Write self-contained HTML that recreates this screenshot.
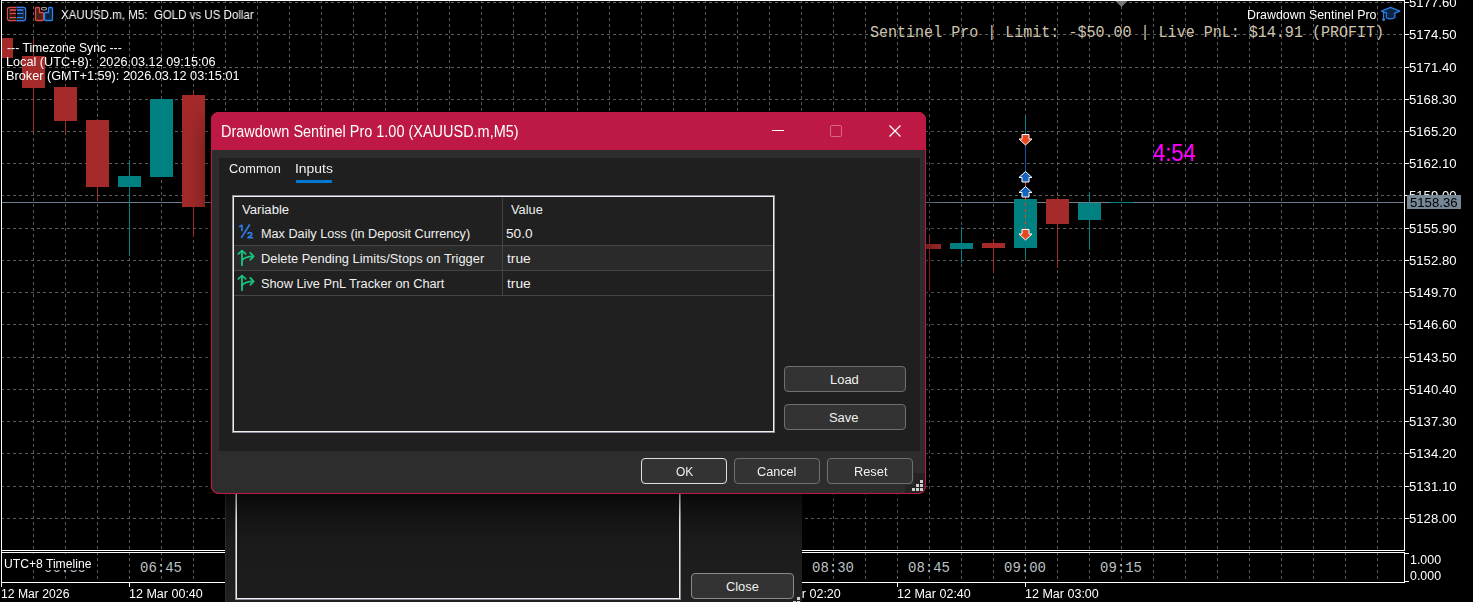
<!DOCTYPE html>
<html><head><meta charset="utf-8">
<style>
html,body{margin:0;padding:0;}
body{width:1473px;height:602px;overflow:hidden;background:#000;position:relative;font-family:"Liberation Sans",sans-serif;}
#chart{position:absolute;left:0;top:0;}
.t{position:absolute;white-space:pre;line-height:1;transform-origin:0 0;}
.g{will-change:transform;}
.abs{position:absolute;}
.btn{position:absolute;box-sizing:border-box;border:1px solid #707070;border-radius:4px;background:#333333;}
</style></head><body>
<svg id="chart" width="1473" height="602" viewBox="0 0 1473 602" shape-rendering="crispEdges">
<path d="M1 2.5H1404 M1 34.5H1404 M1 67.5H1404 M1 99.5H1404 M1 131.5H1404 M1 163.5H1404 M1 195.5H1404 M1 228.5H1404 M1 260.5H1404 M1 292.5H1404 M1 324.5H1404 M1 357.5H1404 M1 389.5H1404 M1 421.5H1404 M1 453.5H1404 M1 486.5H1404 M1 518.5H1404" stroke="#5c5c5c" stroke-dasharray="3 3" fill="none"/>
<path d="M33.5 0V550 M65.5 0V550 M97.5 0V550 M129.5 0V550 M161.5 0V550 M193.5 0V550 M225.5 0V550 M257.5 0V550 M289.5 0V550 M321.5 0V550 M353.5 0V550 M385.5 0V550 M417.5 0V550 M449.5 0V550 M481.5 0V550 M513.5 0V550 M545.5 0V550 M577.5 0V550 M609.5 0V550 M641.5 0V550 M673.5 0V550 M705.5 0V550 M737.5 0V550 M769.5 0V550 M801.5 0V550 M833.5 0V550 M865.5 0V550 M897.5 0V550 M929.5 0V550 M961.5 0V550 M993.5 0V550 M1025.5 0V550 M1057.5 0V550 M1089.5 0V550 M1121.5 0V550 M1153.5 0V550 M1185.5 0V550 M1217.5 0V550 M1249.5 0V550 M1281.5 0V550 M1313.5 0V550 M1345.5 0V550 M1377.5 0V550" stroke="#5c5c5c" stroke-dasharray="3 3" fill="none"/>
<path d="M33.5 552V582 M65.5 552V582 M97.5 552V582 M129.5 552V582 M161.5 552V582 M193.5 552V582 M225.5 552V582 M257.5 552V582 M289.5 552V582 M321.5 552V582 M353.5 552V582 M385.5 552V582 M417.5 552V582 M449.5 552V582 M481.5 552V582 M513.5 552V582 M545.5 552V582 M577.5 552V582 M609.5 552V582 M641.5 552V582 M673.5 552V582 M705.5 552V582 M737.5 552V582 M769.5 552V582 M801.5 552V582 M833.5 552V582 M865.5 552V582 M897.5 552V582 M929.5 552V582 M961.5 552V582 M993.5 552V582 M1025.5 552V582 M1057.5 552V582 M1089.5 552V582 M1121.5 552V582 M1153.5 552V582 M1185.5 552V582 M1217.5 552V582 M1249.5 552V582 M1281.5 552V582 M1313.5 552V582 M1345.5 552V582 M1377.5 552V582" stroke="#5c5c5c" stroke-dasharray="3 3" fill="none"/>
<rect x="2" y="202" width="1402" height="1" fill="#6e7e8e"/>
<rect x="-10" y="38" width="23" height="20" fill="#a52a2a"/>
<rect x="33" y="39" width="1" height="93" fill="#a52a2a"/><rect x="22" y="56" width="23" height="32" fill="#a52a2a"/>
<rect x="65" y="85" width="1" height="48" fill="#a52a2a"/><rect x="54" y="87" width="23" height="34" fill="#a52a2a"/>
<rect x="97" y="119" width="1" height="82" fill="#a52a2a"/><rect x="86" y="120" width="23" height="67" fill="#a52a2a"/>
<rect x="129" y="160" width="1" height="96" fill="#008080"/><rect x="118" y="176" width="23" height="11" fill="#008080"/>
<rect x="150" y="99" width="23" height="78" fill="#008080"/>
<rect x="193" y="92" width="1" height="145" fill="#a52a2a"/><rect x="182" y="95" width="23" height="112" fill="#a52a2a"/>
<rect x="929" y="235" width="1" height="55" fill="#a52a2a"/><rect x="918" y="244" width="23" height="5" fill="#a52a2a"/>
<rect x="961" y="227" width="1" height="36" fill="#008080"/><rect x="950" y="243" width="23" height="6" fill="#008080"/>
<rect x="993" y="239" width="1" height="34" fill="#a52a2a"/><rect x="982" y="243" width="23" height="5" fill="#a52a2a"/>
<rect x="1025" y="116" width="1" height="142" fill="#008080"/><rect x="1014" y="199" width="23" height="49" fill="#008080"/>
<rect x="1057" y="197" width="1" height="71" fill="#a52a2a"/><rect x="1046" y="199" width="23" height="25" fill="#a52a2a"/>
<rect x="1089" y="192" width="1" height="58" fill="#008080"/><rect x="1078" y="203" width="23" height="17" fill="#008080"/>
<rect x="1110" y="202" width="23" height="1" fill="#008080"/>
<rect x="0" y="0" width="1" height="602" fill="#000"/>
<rect x="1025" y="145" width="1" height="27" fill="#1a4f9a"/>
<rect x="1025" y="182" width="1" height="5" fill="#e8471e"/>
<path d="M1025.5 197V229" stroke="#e8471e" stroke-dasharray="3 3"/>
<polygon points="1022.0,134.5 1029.0,134.5 1029.0,139 1032.0,139 1025.5,145 1019.0,139 1022.0,139" fill="#e8471e" stroke="#fff" stroke-width="1" shape-rendering="geometricPrecision"/>
<polygon points="1025.5,171.5 1032.0,177.5 1029.0,177.5 1029.0,182.0 1022.0,182.0 1022.0,177.5 1019.0,177.5" fill="#1565c0" stroke="#fff" stroke-width="1" shape-rendering="geometricPrecision"/>
<polygon points="1025.5,186.5 1032.0,192.5 1029.0,192.5 1029.0,197.0 1022.0,197.0 1022.0,192.5 1019.0,192.5" fill="#1565c0" stroke="#fff" stroke-width="1" shape-rendering="geometricPrecision"/>
<polygon points="1022.0,229.5 1029.0,229.5 1029.0,234 1032.0,234 1025.5,240 1019.0,234 1022.0,234" fill="#e8471e" stroke="#fff" stroke-width="1" shape-rendering="geometricPrecision"/>
<polygon points="1115.5,1 1127.5,1 1121.5,7" fill="#777777" shape-rendering="geometricPrecision"/>
<rect x="1" y="0" width="1404" height="1" fill="#ffffff"/>
<rect x="1" y="0" width="1" height="583" fill="#ffffff"/>
<rect x="1404" y="0" width="1" height="551" fill="#ffffff"/>
<rect x="1404" y="552" width="1" height="31" fill="#ffffff"/>
<rect x="1" y="550" width="1404" height="1" fill="#ffffff"/>
<rect x="1" y="552" width="1404" height="1" fill="#ffffff"/>
<rect x="1" y="582" width="1404" height="1" fill="#ffffff"/>
<rect x="1405" y="2" width="4" height="1" fill="#ffffff"/>
<rect x="1405" y="34" width="4" height="1" fill="#ffffff"/>
<rect x="1405" y="67" width="4" height="1" fill="#ffffff"/>
<rect x="1405" y="99" width="4" height="1" fill="#ffffff"/>
<rect x="1405" y="131" width="4" height="1" fill="#ffffff"/>
<rect x="1405" y="163" width="4" height="1" fill="#ffffff"/>
<rect x="1405" y="195" width="4" height="1" fill="#ffffff"/>
<rect x="1405" y="228" width="4" height="1" fill="#ffffff"/>
<rect x="1405" y="260" width="4" height="1" fill="#ffffff"/>
<rect x="1405" y="292" width="4" height="1" fill="#ffffff"/>
<rect x="1405" y="324" width="4" height="1" fill="#ffffff"/>
<rect x="1405" y="357" width="4" height="1" fill="#ffffff"/>
<rect x="1405" y="389" width="4" height="1" fill="#ffffff"/>
<rect x="1405" y="421" width="4" height="1" fill="#ffffff"/>
<rect x="1405" y="453" width="4" height="1" fill="#ffffff"/>
<rect x="1405" y="486" width="4" height="1" fill="#ffffff"/>
<rect x="1405" y="518" width="4" height="1" fill="#ffffff"/>
<rect x="1405" y="553" width="4" height="1" fill="#ffffff"/>
<rect x="1405" y="581" width="4" height="1" fill="#ffffff"/>
<rect x="1" y="583" width="1" height="4" fill="#ffffff"/>
<rect x="129" y="583" width="1" height="4" fill="#ffffff"/>
<rect x="897" y="583" width="1" height="4" fill="#ffffff"/>
<rect x="1025" y="583" width="1" height="4" fill="#ffffff"/>
<g shape-rendering="geometricPrecision">
 <rect x="7.5" y="7.5" width="18" height="13" rx="2" fill="none" stroke="#e04848" stroke-width="1.3"/>
 <rect x="16.5" y="6.8" width="9.7" height="14.4" fill="#000"/>
 <path d="M16.5 7.5H23.5a2 2 0 0 1 2 2V18.5a2 2 0 0 1-2 2H16.5" fill="none" stroke="#2f7ff0" stroke-width="1.3"/>
 <rect x="9.5" y="9.5" width="14" height="9" fill="none" stroke="#333" stroke-width="1"/>
 <rect x="10" y="9" width="6" height="2" fill="#c0403a"/>
 <rect x="10" y="13" width="6" height="1" fill="#e85050"/>
 <rect x="10" y="17" width="6" height="1" fill="#e85050"/>
 <rect x="10" y="11" width="6" height="2" fill="#401510"/>
 <rect x="10" y="14" width="6" height="3" fill="#401510"/>
 <rect x="17" y="9" width="6" height="2" fill="#2a6ad0"/>
 <rect x="17" y="13" width="6" height="1" fill="#3388ff"/>
 <rect x="17" y="17" width="6" height="1" fill="#3388ff"/>
 <rect x="17" y="11" width="6" height="2" fill="#0a2540"/>
 <rect x="17" y="14" width="6" height="3" fill="#0a2540"/>
</g>
<g shape-rendering="geometricPrecision">
 <path d="M35.5 8.5a1 1 0 0 1 1-1H38.5a1 1 0 0 1 1 1V12.5H42.5a1 1 0 0 1 1 1V19.5a1 1 0 0 1-1 1H36.5a1 1 0 0 1-1-1Z" fill="#4a2015" stroke="#e04848" stroke-width="1.3"/>
 <path d="M52.5 8.5a1 1 0 0 0-1-1H49.5a1 1 0 0 0-1 1V12.5H45.5a1 1 0 0 0-1 1V19.5a1 1 0 0 0 1 1H51.5a1 1 0 0 0 1-1Z" fill="#0a2540" stroke="#2f7ff0" stroke-width="1.3"/>
 <rect x="41.5" y="7.5" width="5" height="2.5" rx="1.2" fill="none" stroke="#a0a0a0" stroke-width="1.2"/>
</g>
<g shape-rendering="geometricPrecision">
 <path d="M1381.5 11.2L1390.6 7.4L1399.8 11.2L1390.6 14.8Z" fill="#0a2540" stroke="#2b7de9" stroke-width="1.3" stroke-linejoin="round"/>
 <path d="M1386.3 13.2V17a4.3 1.8 0 0 0 8.6 0V13.2" fill="#0a2540" stroke="#2b7de9" stroke-width="1.3"/>
 <path d="M1383.6 12V18.5" stroke="#2b7de9" stroke-width="1.3"/>
 <circle cx="1383.6" cy="19.6" r="1.5" fill="#2b7de9"/>
</g>

</svg>
<div class="t g" style="left:61.00px;top:9.00px;font-family:'Liberation Sans';font-size:12px;color:#ffffff;transform:scale(0.9602,1.0);">XAUUSD.m, M5:  GOLD vs US Dollar</div>
<div class="t g" style="left:7.00px;top:42.00px;font-family:'Liberation Sans';font-size:12px;color:#ffffff;transform:scale(1.0179,1.0);">--- Timezone Sync ---</div>
<div class="t g" style="left:5.94px;top:56.00px;font-family:'Liberation Sans';font-size:12px;color:#ffffff;transform:scale(1.0558,1.0);">Local (UTC+8):  2026.03.12 09:15:06</div>
<div class="t g" style="left:5.94px;top:70.00px;font-family:'Liberation Sans';font-size:12px;color:#ffffff;transform:scale(1.0594,1.0);">Broker (GMT+1:59): 2026.03.12 03:15:01</div>
<div class="t g" style="left:1246.97px;top:9.00px;font-family:'Liberation Sans';font-size:12px;color:#ffffff;transform:scale(1.0323,1.0);">Drawdown Sentinel Pro</div>
<div class="t" style="left:870.06px;top:25.00px;font-family:'Liberation Mono';font-size:16px;color:#cfc4b0;transform:scale(0.9393,1.0);">Sentinel Pro | Limit: -$50.00 | Live PnL: $14.91 (PROFIT)</div>
<div class="t" style="left:1153.00px;top:141.80px;font-family:'Liberation Sans';font-size:22px;color:#ff00ff;transform:scale(1.0,1.0667);">4:54</div>
<div class="t g" style="left:1408.90px;top:-3.00px;font-family:'Liberation Sans';font-size:12px;color:#ffffff;transform:scale(1.0952,1.0);">5177.60</div>
<div class="t g" style="left:1408.90px;top:29.00px;font-family:'Liberation Sans';font-size:12px;color:#ffffff;transform:scale(1.0952,1.0);">5174.50</div>
<div class="t g" style="left:1408.90px;top:62.00px;font-family:'Liberation Sans';font-size:12px;color:#ffffff;transform:scale(1.0952,1.0);">5171.40</div>
<div class="t g" style="left:1408.90px;top:94.00px;font-family:'Liberation Sans';font-size:12px;color:#ffffff;transform:scale(1.0952,1.0);">5168.30</div>
<div class="t g" style="left:1408.90px;top:126.00px;font-family:'Liberation Sans';font-size:12px;color:#ffffff;transform:scale(1.0952,1.0);">5165.20</div>
<div class="t g" style="left:1408.90px;top:158.00px;font-family:'Liberation Sans';font-size:12px;color:#ffffff;transform:scale(1.0952,1.0);">5162.10</div>
<div class="t g" style="left:1408.90px;top:190.00px;font-family:'Liberation Sans';font-size:12px;color:#ffffff;transform:scale(1.0952,1.0);">5159.00</div>
<div class="t g" style="left:1408.90px;top:223.00px;font-family:'Liberation Sans';font-size:12px;color:#ffffff;transform:scale(1.0952,1.0);">5155.90</div>
<div class="t g" style="left:1408.90px;top:255.00px;font-family:'Liberation Sans';font-size:12px;color:#ffffff;transform:scale(1.0952,1.0);">5152.80</div>
<div class="t g" style="left:1408.90px;top:287.00px;font-family:'Liberation Sans';font-size:12px;color:#ffffff;transform:scale(1.0952,1.0);">5149.70</div>
<div class="t g" style="left:1408.90px;top:319.00px;font-family:'Liberation Sans';font-size:12px;color:#ffffff;transform:scale(1.0952,1.0);">5146.60</div>
<div class="t g" style="left:1408.90px;top:352.00px;font-family:'Liberation Sans';font-size:12px;color:#ffffff;transform:scale(1.0952,1.0);">5143.50</div>
<div class="t g" style="left:1408.90px;top:384.00px;font-family:'Liberation Sans';font-size:12px;color:#ffffff;transform:scale(1.0952,1.0);">5140.40</div>
<div class="t g" style="left:1408.90px;top:416.00px;font-family:'Liberation Sans';font-size:12px;color:#ffffff;transform:scale(1.0952,1.0);">5137.30</div>
<div class="t g" style="left:1408.90px;top:448.00px;font-family:'Liberation Sans';font-size:12px;color:#ffffff;transform:scale(1.0952,1.0);">5134.20</div>
<div class="t g" style="left:1408.90px;top:481.00px;font-family:'Liberation Sans';font-size:12px;color:#ffffff;transform:scale(1.0952,1.0);">5131.10</div>
<div class="t g" style="left:1408.90px;top:513.00px;font-family:'Liberation Sans';font-size:12px;color:#ffffff;transform:scale(1.0952,1.0);">5128.00</div>
<div class="abs" style="left:1407px;top:195px;width:54px;height:14px;background:#778899;"></div>
<div class="t g" style="left:1409.90px;top:197.00px;font-family:'Liberation Sans';font-size:12px;color:#000000;transform:scale(1.0952,1.0);">5158.36</div>
<div class="t g" style="left:1409.97px;top:554.00px;font-family:'Liberation Sans';font-size:12px;color:#ffffff;transform:scale(1.0345,1.0);">1.000</div>
<div class="t g" style="left:1410.00px;top:570.00px;font-family:'Liberation Sans';font-size:12px;color:#ffffff;transform:scale(1.0333,1.0);">0.000</div>
<div class="t" style="left:44.00px;top:561.00px;font-family:'Liberation Mono';font-size:14px;color:#bcc0c6;transform:scale(1.0,1.0);">06:30</div>
<div class="t" style="left:140.00px;top:561.00px;font-family:'Liberation Mono';font-size:14px;color:#bcc0c6;transform:scale(1.0,1.0);">06:45</div>
<div class="t" style="left:812.00px;top:561.00px;font-family:'Liberation Mono';font-size:14px;color:#bcc0c6;transform:scale(1.0,1.0);">08:30</div>
<div class="t" style="left:908.00px;top:561.00px;font-family:'Liberation Mono';font-size:14px;color:#bcc0c6;transform:scale(1.0,1.0);">08:45</div>
<div class="t" style="left:1004.00px;top:561.00px;font-family:'Liberation Mono';font-size:14px;color:#bcc0c6;transform:scale(1.0,1.0);">09:00</div>
<div class="t" style="left:1100.00px;top:561.00px;font-family:'Liberation Mono';font-size:14px;color:#bcc0c6;transform:scale(1.0,1.0);">09:15</div>
<div class="abs" style="left:2px;top:554px;width:91px;height:16px;background:#000;"></div>
<div class="t g" style="left:3.99px;top:558.00px;font-family:'Liberation Sans';font-size:12px;color:#ffffff;transform:scale(1.0118,1.0);">UTC+8 Timeline</div>
<div class="t g" style="left:0.98px;top:588.00px;font-family:'Liberation Sans';font-size:12px;color:#ffffff;transform:scale(1.0152,1.0);">12 Mar 2026</div>
<div class="t g" style="left:128.96px;top:588.00px;font-family:'Liberation Sans';font-size:12px;color:#ffffff;transform:scale(1.0435,1.0);">12 Mar 00:40</div>
<div class="t g" style="left:766.96px;top:588.00px;font-family:'Liberation Sans';font-size:12px;color:#ffffff;transform:scale(1.0435,1.0);">12 Mar 02:20</div>
<div class="t g" style="left:896.96px;top:588.00px;font-family:'Liberation Sans';font-size:12px;color:#ffffff;transform:scale(1.0435,1.0);">12 Mar 02:40</div>
<div class="t g" style="left:1024.96px;top:588.00px;font-family:'Liberation Sans';font-size:12px;color:#ffffff;transform:scale(1.0435,1.0);">12 Mar 03:00</div>
<!-- window behind -->
<div class="abs" style="left:225px;top:494px;width:577px;height:108px;background:linear-gradient(#121212,#1c1c1c 50%,#202020);"></div>
<div class="abs" style="left:225px;top:494px;width:1px;height:108px;background:#2a2a2a;"></div>
<div class="abs" style="left:235px;top:490px;width:446px;height:110px;box-sizing:border-box;border:1px solid #8a9099;border-top:none;"><div class="abs" style="left:0;top:0;width:444px;height:109px;box-sizing:border-box;border:1px solid #f0f0f0;border-top:none;background:linear-gradient(#111,#1a1a1a 50%,#1d1d1d);"></div></div>
<div class="btn" style="left:691px;top:573px;width:103px;height:26px;border-color:#8a8a8a;"></div>
<div class="t" style="left:725.93px;top:581.00px;font-family:'Liberation Sans';font-size:12px;color:#f0f0f0;transform:scale(1.069,1.0);">Close</div>
<svg class="abs" style="left:0;top:0;" width="1473" height="602" shape-rendering="crispEdges"><g fill="#cfcfcf"><rect x="797" y="597" width="3" height="3"/><rect x="793" y="601" width="3" height="3"/><rect x="797" y="601" width="3" height="3"/></g></svg>
<!-- dialog -->
<div class="abs" style="left:211px;top:112px;width:715px;height:382px;border-radius:8px;background:#2d2d2d;box-shadow:0 8px 28px rgba(0,0,0,0.6);"></div>
<div class="abs" style="left:211px;top:112px;width:715px;height:382px;border-radius:8px;box-sizing:border-box;border:1px solid #bd1944;"></div>
<div class="abs" style="left:211px;top:112px;width:715px;height:38px;border-radius:8px 8px 0 0;background:#bd1944;"></div>
<div class="abs" style="left:772px;top:130px;width:12px;height:1px;background:#fff;"></div>
<div class="abs" style="left:830px;top:125px;width:12px;height:12px;box-sizing:border-box;border:1px solid rgba(255,255,255,0.35);border-radius:2px;"></div>
<svg class="abs" style="left:888px;top:124px;" width="14" height="14" viewBox="0 0 14 14"><path d="M1.5 1.5L12.5 12.5M12.5 1.5L1.5 12.5" stroke="#fff" stroke-width="1.2"/></svg>
<div class="abs" style="left:219px;top:158px;width:701px;height:293px;background:#1f1f1f;"></div>
<div class="abs" style="left:296px;top:180px;width:36px;height:3px;background:#0078d4;"></div>
<div class="abs" style="left:232px;top:195px;width:543px;height:238px;box-sizing:border-box;border:1px solid #8a9099;background:#202020;"><div class="abs" style="left:0;top:0;width:541px;height:236px;box-sizing:border-box;border:1px solid #f0f0f0;"></div></div>
<div class="abs" style="left:234px;top:246px;width:539px;height:24px;background:#2a2a2a;"></div>
<div class="abs" style="left:234px;top:245px;width:539px;height:1px;background:#444444;"></div>
<div class="abs" style="left:234px;top:270px;width:539px;height:1px;background:#444444;"></div>
<div class="abs" style="left:234px;top:295px;width:539px;height:1px;background:#444444;"></div>
<div class="abs" style="left:502px;top:198px;width:1px;height:97px;background:#444444;"></div>
<svg class="abs" style="left:0;top:0;" width="1473" height="602" viewBox="0 0 1473 602">
  <g fill="none" stroke="#2f7ae5" stroke-width="1.7" stroke-linecap="round" stroke-linejoin="round">
    <path d="M239.6 226.4L241.9 225.2V230.4"/>
    <path d="M249.4 225L241.6 237.4"/>
    <path d="M247.9 233.6C248.6 232.4 251.9 232.2 251.9 234.2C251.9 235.2 249.5 236.4 247.9 237.6H252.4"/>
  </g>
  <g id="spl" fill="none" stroke="#19c47f" stroke-width="1.8" stroke-linecap="round" stroke-linejoin="round">
    <path d="M242 265.2V251"/>
    <path d="M238.4 253.8L242 250.6L245.6 253.8"/>
    <path d="M242.2 260.4C244 257.5 247 256.3 253.2 256.3"/>
    <path d="M250.3 252.8L253.6 256.3L250.3 259.8"/>
  </g>
  <use href="#spl" y="25"/>
</svg>
<div class="btn" style="left:784px;top:366px;width:122px;height:26px;"></div>
<div class="btn" style="left:784px;top:404px;width:122px;height:26px;"></div>
<div class="btn" style="left:641px;top:458px;width:86px;height:26px;border-color:#e0e0e0;"></div>
<div class="btn" style="left:734px;top:458px;width:86px;height:26px;"></div>
<div class="btn" style="left:827px;top:458px;width:86px;height:26px;"></div>
<div class="abs" style="left:914px;top:473px;width:11px;height:20px;background:#232323;border-bottom-right-radius:8px;"></div>
<div class="abs" style="left:905px;top:485px;width:20px;height:8px;background:#232323;border-bottom-right-radius:8px;"></div>
<svg class="abs" style="left:0;top:0;" width="1473" height="602" shape-rendering="crispEdges"><g fill="#cfcfcf"><rect x="920" y="480" width="3" height="3"/><rect x="916" y="484" width="3" height="3"/><rect x="920" y="484" width="3" height="3"/><rect x="912" y="488" width="3" height="3"/><rect x="916" y="488" width="3" height="3"/><rect x="920" y="488" width="3" height="3"/></g></svg>
<div class="abs" style="left:211px;top:112px;width:715px;height:382px;border-radius:8px;box-sizing:border-box;border:1px solid #bd1944;"></div>
<div class="t" style="left:221.07px;top:122.70px;font-family:'Liberation Sans';font-size:15.5px;color:#ffffff;transform:scale(0.9338,1.1);">Drawdown Sentinel Pro 1.00 (XAUUSD.m,M5)</div>
<div class="t" style="left:228.94px;top:163.00px;font-family:'Liberation Sans';font-size:12px;color:#f0f0f0;transform:scale(1.0638,1.0);">Common</div>
<div class="t" style="left:294.84px;top:163.00px;font-family:'Liberation Sans';font-size:12px;color:#f0f0f0;transform:scale(1.1613,1.0);">Inputs</div>
<div class="t" style="left:242.00px;top:204.00px;font-family:'Liberation Sans';font-size:12px;color:#f0f0f0;transform:scale(1.093,1.0);">Variable</div>
<div class="t" style="left:511.00px;top:204.00px;font-family:'Liberation Sans';font-size:12px;color:#f0f0f0;transform:scale(1.0667,1.0);">Value</div>
<div class="t" style="left:260.94px;top:228.00px;font-family:'Liberation Sans';font-size:12px;color:#f0f0f0;transform:scale(1.0561,1.0);">Max Daily Loss (in Deposit Currency)</div>
<div class="t" style="left:505.86px;top:228.00px;font-family:'Liberation Sans';font-size:12px;color:#f0f0f0;transform:scale(1.1364,1.0);">50.0</div>
<div class="t" style="left:260.93px;top:253.00px;font-family:'Liberation Sans';font-size:12px;color:#f0f0f0;transform:scale(1.0725,1.0);">Delete Pending Limits/Stops on Trigger</div>
<div class="t" style="left:260.94px;top:278.00px;font-family:'Liberation Sans';font-size:12px;color:#f0f0f0;transform:scale(1.0643,1.0);">Show Live PnL Tracker on Chart</div>
<div class="t" style="left:829.92px;top:374.00px;font-family:'Liberation Sans';font-size:12px;color:#f0f0f0;transform:scale(1.08,1.0);">Load</div>
<div class="t" style="left:828.92px;top:412.00px;font-family:'Liberation Sans';font-size:12px;color:#f0f0f0;transform:scale(1.0769,1.0);">Save</div>
<div class="t" style="left:676.00px;top:466.00px;font-family:'Liberation Sans';font-size:12px;color:#f0f0f0;transform:scale(1.0,1.0);">OK</div>
<div class="t" style="left:756.94px;top:466.00px;font-family:'Liberation Sans';font-size:12px;color:#f0f0f0;transform:scale(1.0556,1.0);">Cancel</div>
<div class="t" style="left:853.93px;top:466.00px;font-family:'Liberation Sans';font-size:12px;color:#f0f0f0;transform:scale(1.0667,1.0);">Reset</div>
<div class="t" style="left:507.00px;top:253.00px;font-family:'Liberation Sans';font-size:12px;color:#f0f0f0;transform:scale(1.15,1.0);">true</div>
<div class="t" style="left:507.00px;top:278.00px;font-family:'Liberation Sans';font-size:12px;color:#f0f0f0;transform:scale(1.15,1.0);">true</div>
</body></html>
